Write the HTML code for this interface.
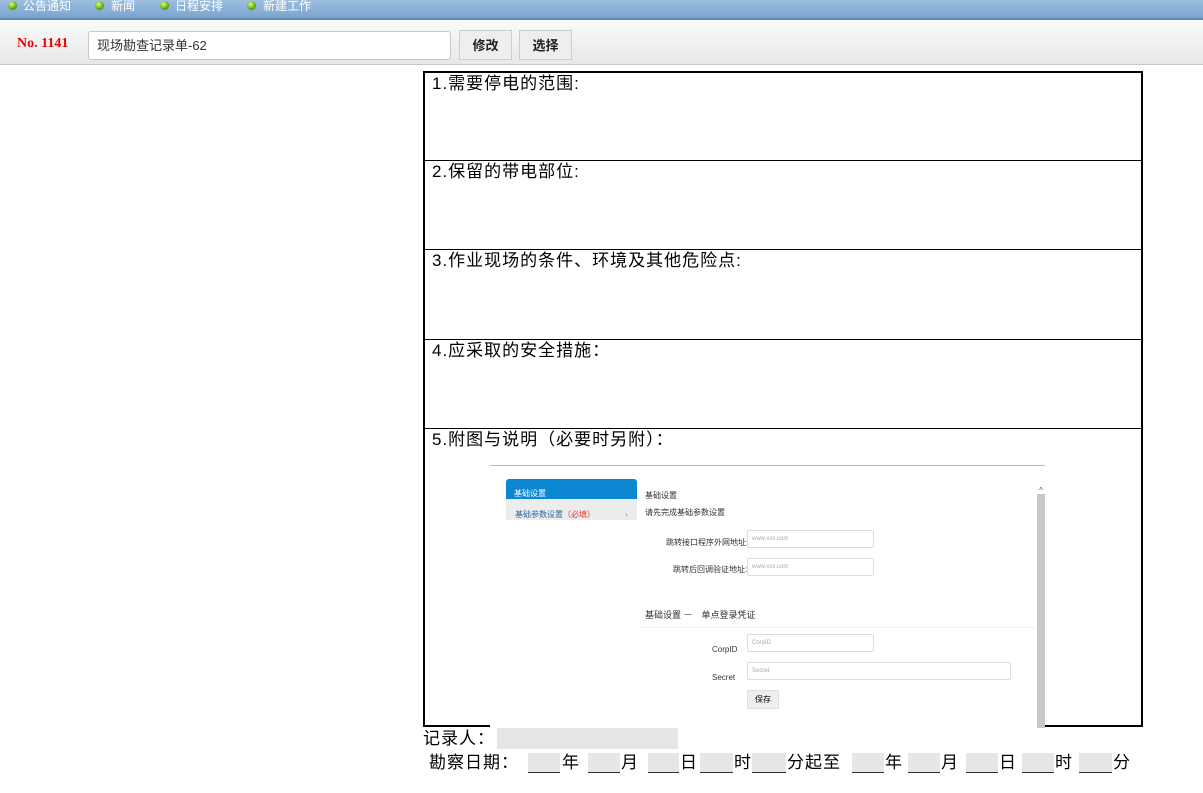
<!DOCTYPE html>
<html><head><meta charset="utf-8"><style>
body{margin:0;width:1203px;height:793px;overflow:hidden;background:#fff;font-family:"Liberation Sans","Noto Sans CJK SC",sans-serif;position:relative}
.top{position:absolute;left:0;top:0;width:1203px;height:18px;background:linear-gradient(#9dbfe0,#7aa3cc);border-bottom:2px solid #5d87b5}
.top span{position:absolute;top:0;color:#fff;font-size:12px;line-height:13px}
.dot{position:absolute;top:1px;width:9px;height:9px;border-radius:50%;background:radial-gradient(circle at 40% 35%,#d8ff80,#4a9a00 70%,#2d5a00)}
.bar{position:absolute;left:0;top:20px;width:1203px;height:44px;background:linear-gradient(#fafafa,#e6e8ea);border-bottom:1px solid #c8c8c8}
.no{position:absolute;left:17px;top:36px;color:#e00;font:bold 14px "Liberation Serif",serif}
.inp{position:absolute;left:88px;top:31px;width:363px;height:29px;border:1px solid #c8c8c8;border-radius:3px;background:#fff;font-size:13px;line-height:27px;padding-left:8px;box-sizing:border-box;color:#333}
.btn{position:absolute;top:30px;height:30px;border:1px solid #ccc;background:#eee;font-size:13px;font-weight:bold;line-height:29px;text-align:center;box-sizing:border-box;color:#222}
.tbl{position:absolute;left:423px;top:71px;width:720px;height:656px;border:2px solid #000;box-sizing:border-box}
.row{position:absolute;left:0;width:716px;border-top:1px solid #000;font-size:17px;font-family:"Liberation Sans","Noto Sans CJK SC",sans-serif;padding-left:7px;box-sizing:border-box;line-height:22px;letter-spacing:1px}
.g{position:absolute;font-size:8px;color:#333;letter-spacing:0}
.fi{position:absolute;border:1px solid #ddd;border-radius:2px;background:#fff;font-size:6px;color:#aaa;line-height:16px;padding-left:4px;box-sizing:border-box;letter-spacing:0}
.d{position:absolute;top:751px;font-size:17px;line-height:24px;white-space:nowrap}
.u{position:absolute;top:753px;background:#e6e6e6;border-bottom:1px solid #333;height:19px}
</style></head><body>
<div class="top">
<i class="dot" style="left:8px"></i><span style="left:23px">公告通知</span>
<i class="dot" style="left:95px"></i><span style="left:111px">新闻</span>
<i class="dot" style="left:160px"></i><span style="left:175px">日程安排</span>
<i class="dot" style="left:247px"></i><span style="left:263px">新建工作</span>
</div>
<div class="bar"></div>
<div class="no">No. 1141</div>
<div class="inp">现场勘查记录单-62</div>
<div class="btn" style="left:459px;width:53px">修改</div>
<div class="btn" style="left:519px;width:53px">选择</div>
<div class="tbl">
<div class="row" style="top:0;border-top:none;height:87px">1.需要停电的范围:</div>
<div class="row" style="top:87px;height:89px">2.保留的带电部位:</div>
<div class="row" style="top:176px;height:90px">3.作业现场的条件、环境及其他危险点:</div>
<div class="row" style="top:266px;height:89px">4.应采取的安全措施：</div>
<div class="row" style="top:355px;height:298px">5.附图与说明（必要时另附）：
<div style="position:absolute;left:65px;top:36px;width:555px;height:262px;border-top:1px solid #9cc0e0;background:#fff">
 <div style="position:absolute;left:16px;top:13px;width:131px;height:20px;background:#0b86d0;border-radius:3px 3px 0 0"></div>
 <div class="g" style="left:24px;top:17px;color:#fff">基础设置</div>
 <div style="position:absolute;left:16px;top:33px;width:131px;height:21px;background:#ececec"></div>
 <div class="g" style="left:25px;top:38px;color:#2a6aa0">基础参数设置<span style="color:#e33">（必填）</span></div>
 <div class="g" style="left:135px;top:38px;color:#888">›</div>
 <div class="g" style="left:155px;top:19px">基础设置</div>
 <div class="g" style="left:155px;top:36px">请先完成基础参数设置</div>
 <div class="g" style="left:176px;top:66px">跳转接口程序外网地址:</div>
 <div class="fi" style="left:257px;top:64px;width:127px;height:18px">www.xxx.com</div>
 <div class="g" style="left:183px;top:93px">跳转后回调验证地址:</div>
 <div class="fi" style="left:257px;top:92px;width:127px;height:18px">www.xxx.com</div>
 <div class="g" style="left:155px;top:138px;font-size:9px">基础设置 －　单点登录凭证</div>
 <div style="position:absolute;left:150px;top:161px;width:395px;height:1px;background:#eee"></div>
 <div class="g" style="left:222px;top:173px">CorpID</div>
 <div class="fi" style="left:257px;top:168px;width:127px;height:18px">CorpID</div>
 <div class="g" style="left:222px;top:201px">Secret</div>
 <div class="fi" style="left:257px;top:196px;width:264px;height:18px">Secret</div>
 <div style="position:absolute;left:257px;top:224px;width:30px;height:17px;background:#eee;border:1px solid #ddd;font-size:8px;text-align:center;line-height:17px;letter-spacing:0">保存</div>
 <div style="position:absolute;left:547px;top:14px;width:8px;height:248px;background:#c8c8c8"></div>
 <div style="position:absolute;left:547px;top:14px;width:8px;height:14px;background:#fff;font-size:8px;color:#555;text-align:center;letter-spacing:0">^</div>
</div>
</div>
</div>
<div style="position:absolute;left:423px;top:728px;font-size:17px;line-height:22px;letter-spacing:1px">记录人：</div>
<div style="position:absolute;left:497px;top:728px;width:181px;height:21px;background:#e6e6e6"></div>
<div class="d" style="left:429px;letter-spacing:1px">勘察日期：</div>
<div class="u" style="left:528px;width:32px"></div><div class="d" style="left:562px">年</div>
<div class="u" style="left:588px;width:32px"></div><div class="d" style="left:621px">月</div>
<div class="u" style="left:648px;width:31px"></div><div class="d" style="left:680px">日</div>
<div class="u" style="left:700px;width:33px"></div><div class="d" style="left:734px">时</div>
<div class="u" style="left:752px;width:34px"></div><div class="d" style="left:787px;letter-spacing:1px">分起至</div>
<div class="u" style="left:852px;width:32px"></div><div class="d" style="left:885px">年</div>
<div class="u" style="left:908px;width:32px"></div><div class="d" style="left:941px">月</div>
<div class="u" style="left:966px;width:32px"></div><div class="d" style="left:999px">日</div>
<div class="u" style="left:1022px;width:32px"></div><div class="d" style="left:1055px">时</div>
<div class="u" style="left:1079px;width:33px"></div><div class="d" style="left:1113px">分</div>
</body></html>
